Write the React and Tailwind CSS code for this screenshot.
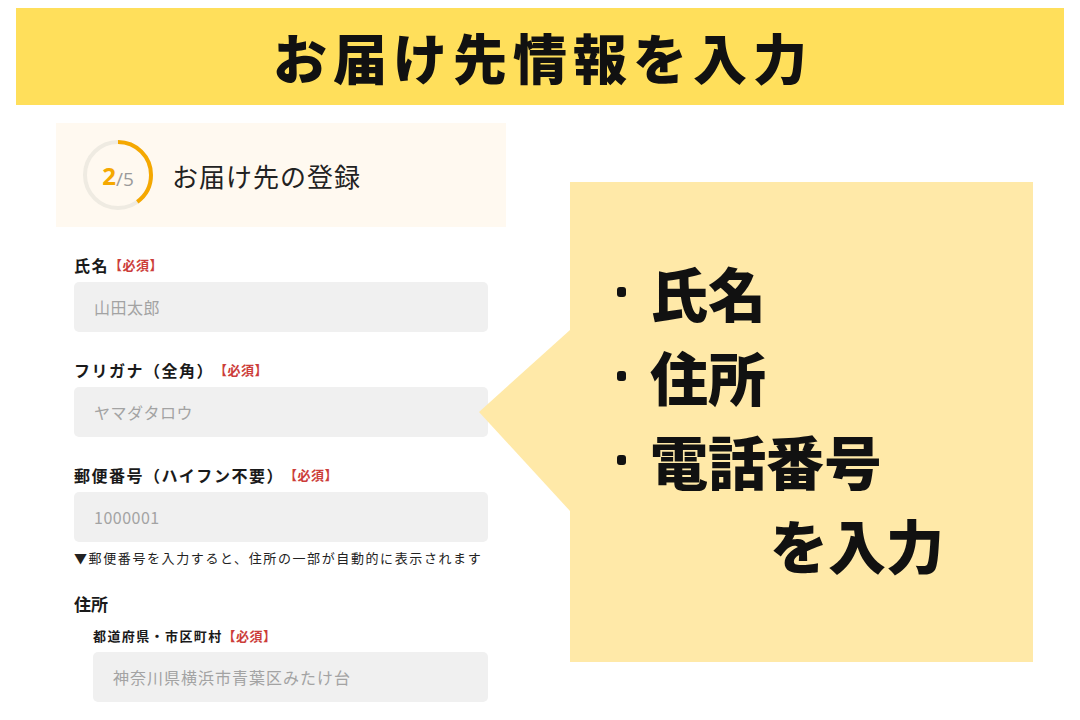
import React from "react";

const jp = { fontFamily: '"Noto Sans CJK JP", "Noto Sans", sans-serif' };

const Required = () => (
  <span className="text-[13px] font-bold text-[#cc3d3a] tracking-[0.5px]">【必須】</span>
);

const Field = ({ label, placeholder, className = "" }) => (
  <div className={className}>
    <div className="h-5 flex items-center text-[16px] leading-5 font-bold text-[#1a1a1a] tracking-[1.5px]">
      <span>{label}</span>
      <Required />
    </div>
    <div className="mt-[7px] h-[50px] rounded-[5px] bg-[#f0f0f0] flex items-center px-5 text-[16px] text-[#a3a3a3] tracking-[0.5px]">
      {placeholder}
    </div>
  </div>
);

const Progress = () => (
  <div className="relative w-[72px] h-[72px]">
    <svg width="72" height="72" viewBox="0 0 72 72">
      <circle cx="36" cy="36" r="33" fill="none" stroke="#efebe2" strokeWidth="4" />
      <circle
        cx="36" cy="36" r="33" fill="none" stroke="#f5a800" strokeWidth="4"
        strokeDasharray={`${2 * Math.PI * 33 * 0.4} ${2 * Math.PI * 33}`}
        transform="rotate(-90 36 36)"
      />
    </svg>
    <div className="absolute inset-0 flex items-center justify-center pt-[2px]" style={{ fontFamily: '"Open Sans", "Noto Sans", sans-serif' }}>
      <span className="text-[24px] font-bold text-[#f5a800] leading-none">2</span>
      <span className="text-[19px] text-[#9a9a9a] leading-none mt-[6px]">/5</span>
    </div>
  </div>
);

const Bullet = ({ children }) => (
  <div className="flex items-center">
    <span className="w-[58px] flex justify-center">
      <span className="w-[9px] h-[10px] rounded-[3px] bg-[#111]" />
    </span>
    <span>{children}</span>
  </div>
);

export default function App() {
  return (
    <div className="w-[1080px] h-[720px] bg-white overflow-hidden" style={jp}>
      <div className="mx-4 mt-2 h-[97px] bg-[#ffdf5b] flex items-center justify-center">
        <h1 className="text-[54px] font-black text-[#111] tracking-[6px] leading-none pl-[6px]">お届け先情報を入力</h1>
      </div>

      <div className="flex items-start mt-[18px]">
        <div className="ml-[56px] w-[450px]">
          <div className="h-[104px] bg-[#fff9f0] flex items-center pl-[26px]">
            <Progress />
            <span className="ml-[18px] text-[26px] text-[#222] tracking-[1px]">お届け先の登録</span>
          </div>

          <div className="px-[18px] pt-[28px]">
            <Field label="氏名" placeholder="山田太郎" />
            <Field label="フリガナ（全角）" placeholder="ヤマダタロウ" className="mt-[28px]" />
            <Field label="郵便番号（ハイフン不要）" placeholder="1000001" className="mt-[28px]" />
            <p className="mt-[7px] text-[13px] leading-[18px] text-[#222] tracking-[1.6px] whitespace-nowrap">
              ▼郵便番号を入力すると、住所の一部が自動的に表示されます
            </p>
            <div className="mt-[26px] text-[17px] leading-[22px] font-bold text-[#1a1a1a]">住所</div>
            <div className="pl-[19px] mt-[11px]">
              <div className="h-5 flex items-center text-[13px] leading-5 font-bold text-[#1a1a1a] tracking-[1.4px]">
                <span>都道府県・市区町村</span>
                <Required />
              </div>
              <div className="mt-[6px] h-[50px] rounded-[5px] bg-[#f0f0f0] flex items-center px-5 text-[16px] text-[#a3a3a3] tracking-[1px]">
                神奈川県横浜市青葉区みたけ台
              </div>
            </div>
          </div>
        </div>

        <div className="relative ml-[64px] mt-[59px] w-[463px] h-[480px] bg-[#ffe9a8]">
          <svg className="absolute right-full top-[148px]" width="91" height="181" viewBox="0 0 91 181">
            <polygon points="91,0 0,82 91,181" fill="#ffe9a8" />
          </svg>
          <div className="pt-[68px] pl-[22px] text-[58px] leading-[84px] font-black text-[#111]">
            <Bullet>氏名</Bullet>
            <Bullet>住所</Bullet>
            <Bullet>電話番号</Bullet>
            <div className="pl-[178px]">を入力</div>
          </div>
        </div>
      </div>
    </div>
  );
}
